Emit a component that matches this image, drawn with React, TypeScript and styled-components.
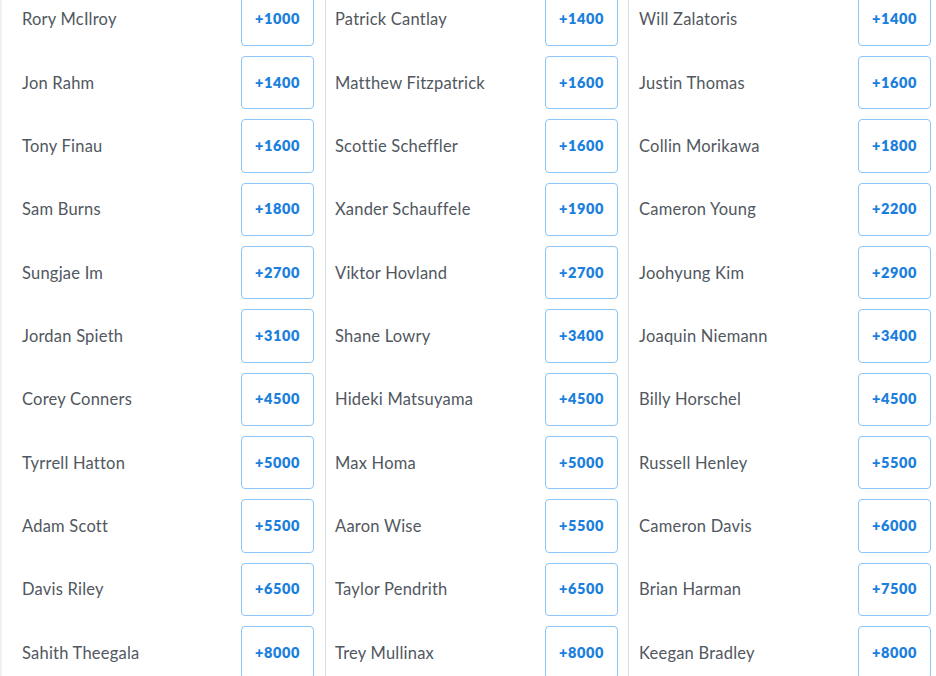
import React from "react";
import styled, { createGlobalStyle } from "styled-components";

const Global = createGlobalStyle`
  html, body { margin: 0; padding: 0; background: #eef0f3; overflow: hidden; }
  body { font-family: Lato, "Open Sans", sans-serif; }
`;

const Page = styled.div`
  margin-left: 2px;
  height: 676px;
  background: #ffffff;
  overflow: hidden;
`;

const Grid = styled.div`
  display: grid;
  grid-template-columns: 323px 303px 1fr;
  margin-top: -7.33px;
`;

const Column = styled.div<{ $first?: boolean }>`
  display: flex;
  flex-direction: column;
  gap: 10px;
  padding: 0 ${(p) => (p.$first ? "11px" : "10px")} 0 ${(p) => (p.$first ? "20px" : "9px")};
  border-left: ${(p) => (p.$first ? "none" : "1px solid #d9dde2")};
`;

const LastColumn = styled(Column)`
  padding-left: 10px;
  padding-right: 5px;
`;

const Row = styled.div`
  display: flex;
  align-items: center;
  justify-content: space-between;
  height: 53.33px;
`;

const Name = styled.span`
  font-size: 16.5px;
  line-height: 20px;
  color: #51575e;
  letter-spacing: 0.22px;
`;

const Odds = styled.button`
  box-sizing: border-box;
  width: 73px;
  height: 53.33px;
  border: 1px solid #8cc5f7;
  border-radius: 4px;
  background: #ffffff;
  color: #1b7fdd;
  font-family: Lato, sans-serif;
  font-weight: 800;
  font-size: 14.5px;
  letter-spacing: 0.55px;
  padding: 0 0 1px 0;
  cursor: pointer;
`;

type Entry = [string, string];

const col1: Entry[] = [
  ["Rory McIlroy", "+1000"],
  ["Jon Rahm", "+1400"],
  ["Tony Finau", "+1600"],
  ["Sam Burns", "+1800"],
  ["Sungjae Im", "+2700"],
  ["Jordan Spieth", "+3100"],
  ["Corey Conners", "+4500"],
  ["Tyrrell Hatton", "+5000"],
  ["Adam Scott", "+5500"],
  ["Davis Riley", "+6500"],
  ["Sahith Theegala", "+8000"],
];

const col2: Entry[] = [
  ["Patrick Cantlay", "+1400"],
  ["Matthew Fitzpatrick", "+1600"],
  ["Scottie Scheffler", "+1600"],
  ["Xander Schauffele", "+1900"],
  ["Viktor Hovland", "+2700"],
  ["Shane Lowry", "+3400"],
  ["Hideki Matsuyama", "+4500"],
  ["Max Homa", "+5000"],
  ["Aaron Wise", "+5500"],
  ["Taylor Pendrith", "+6500"],
  ["Trey Mullinax", "+8000"],
];

const col3: Entry[] = [
  ["Will Zalatoris", "+1400"],
  ["Justin Thomas", "+1600"],
  ["Collin Morikawa", "+1800"],
  ["Cameron Young", "+2200"],
  ["Joohyung Kim", "+2900"],
  ["Joaquin Niemann", "+3400"],
  ["Billy Horschel", "+4500"],
  ["Russell Henley", "+5500"],
  ["Cameron Davis", "+6000"],
  ["Brian Harman", "+7500"],
  ["Keegan Bradley", "+8000"],
];

const Rows = ({ data }: { data: Entry[] }) => (
  <>
    {data.map(([n, o]) => (
      <Row key={n}>
        <Name>{n}</Name>
        <Odds>{o}</Odds>
      </Row>
    ))}
  </>
);

export default function App() {
  return (
    <>
      <Global />
      <Page>
        <Grid>
          <Column $first>
            <Rows data={col1} />
          </Column>
          <Column>
            <Rows data={col2} />
          </Column>
          <LastColumn>
            <Rows data={col3} />
          </LastColumn>
        </Grid>
      </Page>
    </>
  );
}
